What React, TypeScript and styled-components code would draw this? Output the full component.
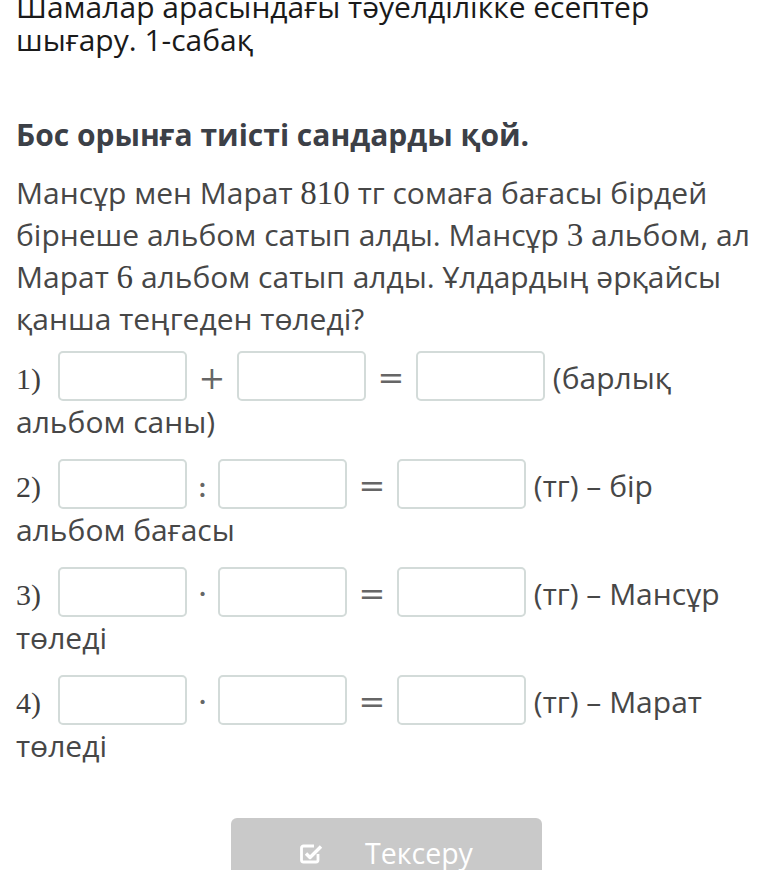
import React from 'react';
import styled, { createGlobalStyle } from 'styled-components';

const GlobalStyle = createGlobalStyle`
  html, body { margin: 0; padding: 0; background: #fff; }
  body { font-family: 'Open Sans', 'Noto Sans', sans-serif; overflow: hidden; }
`;

const Page = styled.div`
  width: 768px;
  box-sizing: border-box;
  padding: 0 12px 0 16px;
`;

const Title = styled.h1`
  margin: -10px 0 0;
  font-size: 30px;
  line-height: 33px;
  font-weight: 400;
  color: #1a1a1a;
`;

const Instruction = styled.h2`
  margin: 63px 0 0;
  font-size: 30px;
  line-height: 32px;
  font-weight: 700;
  color: #3c4047;
`;

const Problem = styled.p`
  margin: 21px 0 0;
  font-size: 30px;
  line-height: 42px;
  color: #474747;
`;

const Num = styled.span`
  font-family: 'Liberation Serif', 'Times New Roman', serif;
  font-size: 33px;
  color: #3f3f3f;
`;

const Row = styled.div<{ $first?: boolean }>`
  margin-top: ${p => (p.$first ? '11px' : '16px')};
  font-size: 30px;
  line-height: 42px;
  color: #474747;
`;

const Label = styled.span`
  display: inline-block;
  width: 42px;
  font-family: 'Liberation Serif', 'Times New Roman', serif;
  font-size: 30px;
  color: #3f3f3f;
`;

const Box = styled.span`
  display: inline-block;
  width: 129px;
  height: 50px;
  box-sizing: border-box;
  border: 2px solid #d3dbd9;
  border-radius: 5px;
  background: #fff;
  vertical-align: -12px;
`;

const Op = styled.span<{ $wide?: boolean }>`
  display: inline-block;
  width: ${p => (p.$wide ? '50px' : '31px')};
  text-align: center;
  font-family: 'DejaVu Serif', 'Liberation Serif', serif;
  font-size: 32px;
  font-weight: 300;
  color: #666;
`;

const ButtonBar = styled.div`
  display: flex;
  justify-content: center;
  margin-top: 51px;
`;

const CheckButton = styled.button`
  display: flex;
  align-items: center;
  justify-content: center;
  gap: 42px;
  width: 311px;
  height: 70px;
  padding: 0;
  border: none;
  border-radius: 6px;
  background: #c9c9c9;
  color: #fff;
  font-family: 'Open Sans', sans-serif;
  font-size: 28.5px;
  cursor: pointer;
  svg { margin-top: 2px; }
`;

const CheckIcon = () => (
  <svg width="24" height="22" viewBox="0 0 24 22" fill="none">
    <path d="M15 3H4.5A2 2 0 0 0 2.5 5v12A2 2 0 0 0 4.5 19h12.5a2 2 0 0 0 2-2v-6" stroke="#fff" strokeWidth="2.8" />
    <path d="M7 10.5l4 4L22 3.5" stroke="#fff" strokeWidth="3.4" strokeLinejoin="round" />
  </svg>
);

const rows = [
  { n: '1)', op: '+', wide: true, tail: '(барлық альбом саны)' },
  { n: '2)', op: ':', wide: false, tail: '(тг) – бір альбом бағасы' },
  { n: '3)', op: '·', wide: false, tail: '(тг) – Мансұр төледі' },
  { n: '4)', op: '·', wide: false, tail: '(тг) – Марат төледі' },
];

export default function App() {
  return (
    <>
      <GlobalStyle />
      <Page>
        <Title>Шамалар арасындағы тәуелділікке есептер шығару. 1-сабақ</Title>
        <Instruction>Бос орынға тиісті сандарды қой.</Instruction>
        <Problem>
          Мансұр мен Марат <Num>810</Num> тг сомаға бағасы бірдей бірнеше альбом сатып алды. Мансұр <Num>3</Num> альбом, ал
          Марат <Num>6</Num> альбом сатып алды. Ұлдардың әрқайсы қанша теңгеден төледі?
        </Problem>
        {rows.map((r, i) => (
          <Row key={r.n} $first={i === 0}>
            <Label>{r.n}</Label>
            <Box />
            <Op $wide={r.wide}>{r.op}</Op>
            <Box />
            <Op $wide>=</Op>
            <Box /> {r.tail}
          </Row>
        ))}
        <ButtonBar>
          <CheckButton>
            <CheckIcon />
            <span>Тексеру</span>
          </CheckButton>
        </ButtonBar>
      </Page>
    </>
  );
}
